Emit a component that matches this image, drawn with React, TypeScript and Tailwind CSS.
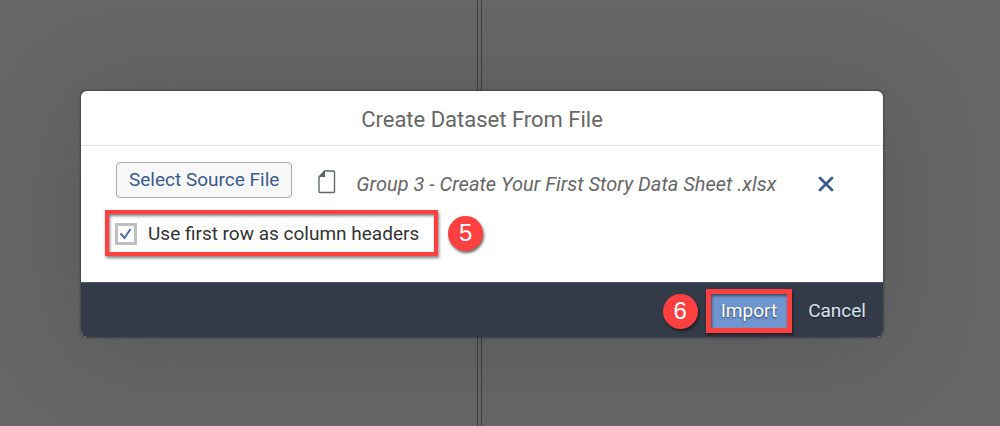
import { useState } from "react";

function StepBadge({ step }: { step: number }) {
  return (
    <span className="flex size-[35px] shrink-0 items-center justify-center rounded-full bg-[#ff4040] font-['Liberation_Sans',sans-serif] text-2xl text-white shadow-[1px_2px_3px_rgba(0,0,0,0.6)]">
      {step}
    </span>
  );
}

function FileIcon() {
  return (
    <svg viewBox="0 0 18 24" className="h-6 w-[18px]" aria-hidden="true">
      <path
        d="M6.5 1H15.5Q16.5 1 16.5 2V21.5Q16.5 22.5 15.5 22.5H2Q1 22.5 1 21.5V7Z"
        fill="#fff"
        stroke="#5f666e"
        strokeWidth="1.4"
        strokeLinejoin="round"
      />
      <path d="M7 1V7H1Z" fill="#5f666e" />
    </svg>
  );
}

function Workspace() {
  return (
    <div className="absolute inset-0 flex gap-[3px]" aria-hidden="true">
      <div className="w-[478px] shrink-0 border-r border-[#3f3f3f]" />
      <div className="grow border-l border-[#3f3f3f]" />
    </div>
  );
}

export default function App() {
  const [headers, setHeaders] = useState(true);

  return (
    <main className="relative flex min-h-screen items-center justify-center bg-[#666666] pt-0.5 pr-9 font-['Roboto',sans-serif] text-[19px]">
      <Workspace />
      <section
        role="dialog"
        aria-labelledby="dialog-title"
        className="relative w-full max-w-[802px] rounded-md bg-white shadow-[0_0_2px_1px_rgba(0,0,0,0.3),0_10px_100px_rgba(0,0,0,0.15)]"
      >
        <header className="flex h-[55px] items-center justify-center border-b border-[#e5e5e5]">
          <h1 id="dialog-title" className="pt-0.5 text-[22px] text-[#666666]">
            Create Dataset From File
          </h1>
        </header>

        <div className="px-6 pt-4 pb-[26px]">
          <div className="flex items-end pl-[11px]">
            <button
              type="button"
              className="h-9 rounded border border-[#ababab] bg-[#f7f7f7] px-3 text-[#3b5b8c]"
            >
              Select Source File
            </button>
            <span className="ml-[26px] flex h-8 items-center">
              <FileIcon />
            </span>
            <span className="ml-5 text-[20px] leading-7 text-[#666666] italic">
              Group 3 - Create Your First Story Data Sheet .xlsx
            </span>
            <button
              type="button"
              aria-label="Remove file"
              className="mr-[25px] ml-auto flex h-7 w-4 items-center"
            >
              <svg viewBox="0 0 16 16" className="size-4" aria-hidden="true">
                <path d="M2 2L14 14M14 2L2 14" stroke="#3b5b8c" strokeWidth="2.8" strokeLinecap="round" />
              </svg>
            </button>
          </div>

          <div className="mt-3 flex items-center gap-[10px]">
            <label className="flex h-[46px] items-center gap-[11px] border-4 border-[#ff4040] pt-0.5 pr-[15px] pl-[6px] text-[#333333] shadow-[1px_2px_3px_rgba(0,0,0,0.5),inset_1px_2px_3px_rgba(0,0,0,0.5)]">
              <span className="relative flex size-[22px]">
                <input
                  type="checkbox"
                  checked={headers}
                  onChange={(event) => setHeaders(event.target.checked)}
                  className="peer size-[22px] appearance-none border-[3px] border-[#bfbfbf] bg-white"
                />
                <svg
                  viewBox="0 0 22 22"
                  className="pointer-events-none absolute inset-0 hidden peer-checked:block"
                  aria-hidden="true"
                >
                  <path d="M5.5 10.5L9.5 15L15.5 6" fill="none" stroke="#4069ae" strokeWidth="1.9" />
                </svg>
              </span>
              Use first row as column headers
            </label>
            <StepBadge step={5} />
          </div>
        </div>

        <footer className="flex h-[55px] items-center justify-end rounded-b-md border-t border-[#465a78] bg-[#343b48] pt-0.5 pr-[17px]">
          <StepBadge step={6} />
          <button
            type="button"
            className="ml-2 h-11 border-[5px] border-[#ff4040] bg-[#7096cf] px-[10px] text-white shadow-[1px_2px_3px_rgba(0,0,0,0.5),inset_1px_2px_3px_rgba(0,0,0,0.5)] text-shadow-[0_1px_2px_rgb(0_0_0/0.6)]"
          >
            Import
          </button>
          <button type="button" className="ml-4 text-[#d6e6f7] text-shadow-[0_1px_1px_rgb(0_0_0/0.6)]">
            Cancel
          </button>
        </footer>
      </section>
    </main>
  );
}
